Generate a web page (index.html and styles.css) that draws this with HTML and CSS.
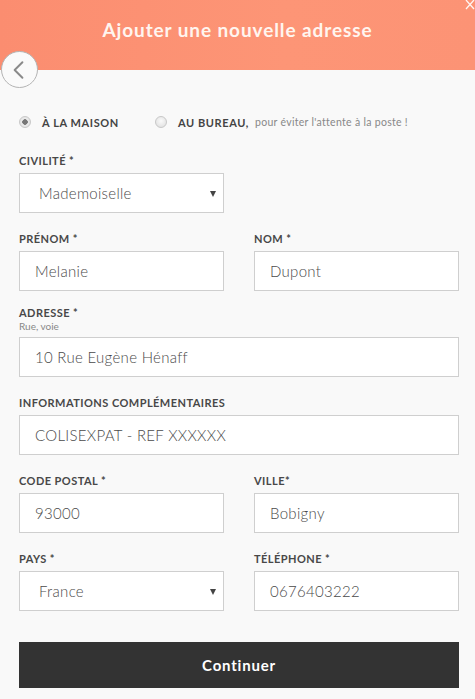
FILE: index.html
```html
<!DOCTYPE html>
<html lang="fr">
<head>
<meta charset="utf-8">
<title>Ajouter une nouvelle adresse</title>
<link rel="stylesheet" href="styles.css">
</head>
<body>
<div class="modal">
  <header class="header">
    <h1 class="title">Ajouter une nouvelle adresse</h1>
    <svg class="close" width="12" height="14" viewBox="0 0 12 14"><path d="M3 0 L11 9 M11 0 L3 9" stroke="#fff" stroke-width="1.3" fill="none" opacity="0.9"/></svg>
    <button class="back" aria-label="Retour">
      <svg width="36" height="36" viewBox="0 0 36 36"><path d="M21 10 L13 18 L21 26" stroke="#8a8a8a" stroke-width="2" fill="none" stroke-linecap="round" stroke-linejoin="round"/></svg>
    </button>
  </header>

  <form class="form">
    <div class="radios">
      <label class="radio"><span class="dot checked"></span><span class="radio-text">À LA MAISON</span></label>
      <label class="radio radio-second"><span class="dot"></span><span class="radio-text">AU BUREAU,</span><span class="radio-hint">pour éviter l'attente à la poste !</span></label>
    </div>

    <div class="row row-first">
      <div class="field">
        <div class="label">CIVILITÉ *</div>
        <div class="box select">Mademoiselle<span class="caret"></span></div>
      </div>
      <div class="field"></div>
    </div>

    <div class="row">
      <div class="field">
        <div class="label">PRÉNOM *</div>
        <div class="box">Melanie</div>
      </div>
      <div class="field">
        <div class="label">NOM *</div>
        <div class="box">Dupont</div>
      </div>
    </div>

    <div class="row row-tight">
      <div class="field full">
        <div class="label label-nomargin">ADRESSE *</div>
        <div class="sublabel">Rue, voie</div>
        <div class="box">10 Rue Eugène Hénaff</div>
      </div>
    </div>

    <div class="row">
      <div class="field full">
        <div class="label">INFORMATIONS COMPLÉMENTAIRES</div>
        <div class="box">COLISEXPAT - REF XXXXXX</div>
      </div>
    </div>

    <div class="row">
      <div class="field">
        <div class="label">CODE POSTAL *</div>
        <div class="box">93000</div>
      </div>
      <div class="field">
        <div class="label">VILLE*</div>
        <div class="box">Bobigny</div>
      </div>
    </div>

    <div class="row">
      <div class="field">
        <div class="label">PAYS *</div>
        <div class="box select">France<span class="caret"></span></div>
      </div>
      <div class="field">
        <div class="label">TÉLÉPHONE *</div>
        <div class="box">0676403222</div>
      </div>
    </div>

    <button type="button" class="submit">Continuer</button>
  </form>
</div>
</body>
</html>
```

FILE: styles.css
```css
* { box-sizing: border-box; }
html, body { margin: 0; padding: 0; }
body {
  background: #f9f9f9;
  font-family: Lato, "Noto Sans", sans-serif;
  color: #333;
  width: 475px;
  height: 699px;
  overflow: hidden;
}
.modal { position: relative; }
.header {
  position: relative;
  height: 70px;
  background: linear-gradient(to right, #fb8d70, #fd9576 60%, #fc9375);
  display: flex;
  align-items: flex-start;
  justify-content: center;
}
.title {
  margin: 0;
  padding-top: 19px;
  font-size: 19px;
  line-height: 22px;
  font-weight: 700;
  color: #fff5ef;
  letter-spacing: 0.9px;
}
.close {
  position: absolute;
  right: 0;
  top: 0;
}
.back {
  position: absolute;
  left: 1px;
  top: 51px;
  width: 37px;
  height: 37px;
  border-radius: 50%;
  border: 1.5px solid #b4b4b4;
  background: #fafafa;
  padding: 0;
  display: flex;
  align-items: center;
  justify-content: center;
}
.back svg { display: block; }
.form {
  padding: 0 16px 0 19px;
}
.radios {
  display: flex;
  align-items: center;
  padding-top: 42px;
  height: 62px;
}
.radio {
  display: flex;
  align-items: center;
}
.radio-second { margin-left: 36px; }
.dot {
  width: 12px;
  height: 12px;
  border-radius: 50%;
  border: 1px solid #c8c8c8;
  background: radial-gradient(circle at 50% 40%, #fafafa, #dcdcdc);
  margin-right: 11px;
  position: relative;
}
.dot.checked {
  background: radial-gradient(circle, #777 0 2.5px, #ececec 3px, #dcdcdc);
}
.radio-text {
  font-size: 11px;
  font-weight: 700;
  color: #444;
  letter-spacing: 0.6px;
}
.radio-hint {
  font-size: 10.5px;
  color: #888;
  margin-left: 6px;
  letter-spacing: 0.3px;
}
.row {
  display: flex;
  gap: 30px;
  margin-top: 19px;
}
.row-first { margin-top: 22px; }
.row-tight { margin-top: 15px; }
.field {
  flex: 1 1 0;
  display: flex;
  flex-direction: column;
}
.field.full { flex: 1 1 100%; }
.label {
  font-size: 11px;
  line-height: 14px;
  font-weight: 700;
  color: #484848;
  margin-bottom: 5px;
  letter-spacing: 0.45px;
}
.label-nomargin { margin-bottom: 0; }
.sublabel {
  font-size: 10px;
  line-height: 12px;
  color: #888;
  margin-bottom: 5px;
}
.box {
  position: relative;
  height: 40px;
  background: #fff;
  border: 1px solid #cfcfcf;
  padding: 0 15px;
  display: flex;
  align-items: center;
  font-size: 15px;
  font-weight: 300;
  color: #4a4a4a;
  letter-spacing: 0.3px;
}
.select { padding-left: 19px; }
.caret {
  position: absolute;
  right: 7px;
  top: 17px;
  width: 0;
  height: 0;
  border-left: 3px solid transparent;
  border-right: 3px solid transparent;
  border-top: 6px solid #444;
}
.submit {
  display: block;
  width: 100%;
  height: 46px;
  margin-top: 31px;
  border: none;
  background: #333;
  color: #fff;
  font-family: Lato, "Noto Sans", sans-serif;
  font-size: 15px;
  font-weight: 700;
  letter-spacing: 0.8px;
}
```
